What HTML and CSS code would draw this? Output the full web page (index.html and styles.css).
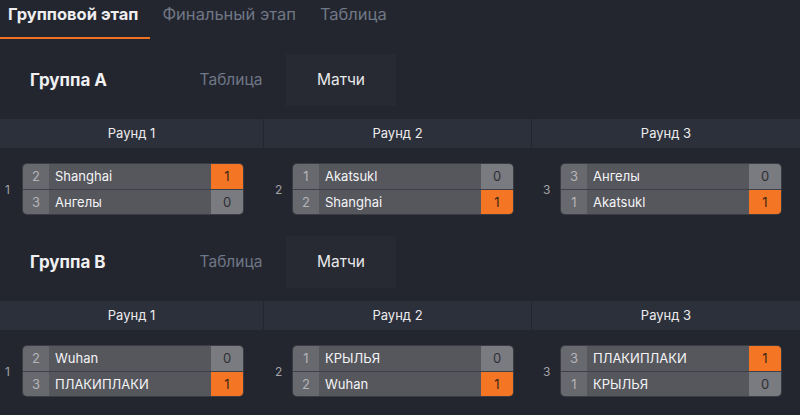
FILE: index.html
```html
<!DOCTYPE html>
<html lang="ru">
<head>
    <meta charset="UTF-8">
    <title>Турнир</title>
    <link rel="stylesheet" href="styles.css">
</head>
<body>
    <ul class="tabs">
        <li><a href="#" class="active">Групповой этап</a></li>
        <li><a href="#">Финальный этап</a></li>
        <li><a href="#">Таблица</a></li>
    </ul>

    <section class="group">
        <div class="group-head">
            <h2>Группа A</h2>
            <a href="#">Таблица</a>
            <a href="#" class="active">Матчи</a>
        </div>
        <div class="rounds">
            <div class="round">
                <div class="round-title">Раунд 1</div>
                <div class="round-body first">
                    <span class="match-no">1</span>
                    <div class="match">
                        <div class="row"><span class="seed">2</span><span class="name">Shanghai</span><span class="score win">1</span></div>
                        <div class="row"><span class="seed">3</span><span class="name">Ангелы</span><span class="score">0</span></div>
                    </div>
                </div>
            </div>
            <div class="round">
                <div class="round-title">Раунд 2</div>
                <div class="round-body">
                    <span class="match-no">2</span>
                    <div class="match">
                        <div class="row"><span class="seed">1</span><span class="name">Akatsukl</span><span class="score">0</span></div>
                        <div class="row"><span class="seed">2</span><span class="name">Shanghai</span><span class="score win">1</span></div>
                    </div>
                </div>
            </div>
            <div class="round">
                <div class="round-title">Раунд 3</div>
                <div class="round-body">
                    <span class="match-no">3</span>
                    <div class="match">
                        <div class="row"><span class="seed">3</span><span class="name">Ангелы</span><span class="score">0</span></div>
                        <div class="row"><span class="seed">1</span><span class="name">Akatsukl</span><span class="score win">1</span></div>
                    </div>
                </div>
            </div>
        </div>
    </section>

    <section class="group">
        <div class="group-head">
            <h2>Группа B</h2>
            <a href="#">Таблица</a>
            <a href="#" class="active">Матчи</a>
        </div>
        <div class="rounds">
            <div class="round">
                <div class="round-title">Раунд 1</div>
                <div class="round-body first">
                    <span class="match-no">1</span>
                    <div class="match">
                        <div class="row"><span class="seed">2</span><span class="name">Wuhan</span><span class="score">0</span></div>
                        <div class="row"><span class="seed">3</span><span class="name">ПЛАКИПЛАКИ</span><span class="score win">1</span></div>
                    </div>
                </div>
            </div>
            <div class="round">
                <div class="round-title">Раунд 2</div>
                <div class="round-body">
                    <span class="match-no">2</span>
                    <div class="match">
                        <div class="row"><span class="seed">1</span><span class="name">КРЫЛЬЯ</span><span class="score">0</span></div>
                        <div class="row"><span class="seed">2</span><span class="name">Wuhan</span><span class="score win">1</span></div>
                    </div>
                </div>
            </div>
            <div class="round">
                <div class="round-title">Раунд 3</div>
                <div class="round-body">
                    <span class="match-no">3</span>
                    <div class="match">
                        <div class="row"><span class="seed">3</span><span class="name">ПЛАКИПЛАКИ</span><span class="score win">1</span></div>
                        <div class="row"><span class="seed">1</span><span class="name">КРЫЛЬЯ</span><span class="score">0</span></div>
                    </div>
                </div>
            </div>
        </div>
    </section>
</body>
</html>
```

FILE: styles.css
```css
body {
    margin: 0;
    background: #23262e;
    font-family: Inter, "Noto Sans", sans-serif;
    color: #e8e8ea;
}
.tabs {
    list-style: none;
    padding: 0;
    margin: 0;
    display: flex;
}
.tabs a {
    display: block;
    padding: 4px 12px 13px;
    line-height: 20px;
    font-size: 16.5px;
    text-decoration: none;
    color: #707786;
    border-bottom: 2px solid transparent;
}
.tabs li:first-child a {
    padding-left: 8px;
}
.tabs a.active {
    color: #eeeef0;
    font-weight: 700;
    border-bottom-color: #f0711f;
}
.group-head {
    display: flex;
    height: 52px;
    margin-top: 15px;
}
.group-head h2 {
    margin: 0;
    width: 146px;
    padding-left: 30px;
    font-size: 17px;
    font-weight: 700;
    line-height: 52px;
    color: #f0f0f2;
}
.group-head a {
    width: 110px;
    text-align: center;
    line-height: 52px;
    font-size: 15.5px;
    text-decoration: none;
    color: #6f7687;
}
.group-head a.active {
    background: #272a32;
    color: #e8e8ea;
}
.rounds {
    display: grid;
    grid-template-columns: 263px 267px 1fr;
    column-gap: 1px;
    margin-top: 13px;
}
.round-title {
    height: 29px;
    line-height: 29px;
    background: #2c303b;
    text-align: center;
    font-size: 13px;
    color: #ececee;
}
.round-body {
    display: flex;
    align-items: center;
    padding: 16px 0 7px 11px;
}
.round-body.first {
    padding-left: 5px;
}
.match-no {
    width: 7px;
    margin-right: 11px;
    font-size: 12px;
    color: #a2a2a8;
}
.match {
    width: 220px;
    border-radius: 4px;
    overflow: hidden;
    box-shadow: 0 0 0 1px #3a3c43;
}
.row {
    display: flex;
    height: 25px;
    font-size: 13px;
    line-height: 25px;
}
.row + .row {
    height: 24px;
    line-height: 24px;
    border-top: 1px solid #3e4047;
}
.seed {
    width: 26px;
    text-align: center;
    background: #68696f;
    color: #b4b4b8;
}
.name {
    flex: 1;
    padding-left: 6px;
    background: #55575d;
    color: #f4f4f6;
}
.score {
    width: 32px;
    text-align: center;
    background: #7a7b80;
    color: #2e2f33;
}
.score.win {
    background: #f47625;
    color: #3a2314;
}
```
